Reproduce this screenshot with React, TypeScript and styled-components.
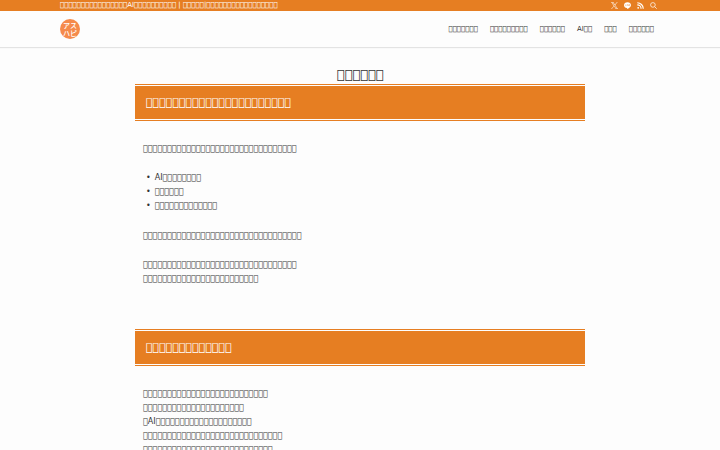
import React from "react";
import styled, { createGlobalStyle } from "styled-components";

const ORANGE = "#e67e22";
const box = (count: number) => "\uE000".repeat(count);

const GlobalStyle = createGlobalStyle`
  * { box-sizing: border-box; }
  body {
    margin: 0;
    background: #fdfdfd;
    color: #333;
    font-family: "DejaVu Sans", sans-serif;
    font-size: 8px;
    overflow-x: hidden;
  }
  a { color: inherit; text-decoration: none; }
`;

const TopBar = styled.div`
  background: ${ORANGE};
  color: #fff;
`;

const Inner = styled.div`
  display: flex;
  align-items: center;
  justify-content: space-between;
  width: 100%;
  max-width: 648px;
  margin: 0 auto;
  padding: 0 24px;
`;

const TopInner = styled(Inner)`
  height: 11px;
`;

const Tagline = styled.span`
  font-size: 7px;
  line-height: 11px;
  white-space: nowrap;
`;

const Icons = styled.div`
  display: flex;
  align-items: center;
  gap: 6px;
  padding-right: 3px;
`;

const IconLink = styled.a`
  display: flex;
`;

const IconButton = styled.button`
  display: flex;
  padding: 0;
  border: 0;
  background: none;
  color: inherit;
`;

const Header = styled.header`
  background: #fdfdfd;
  box-shadow: 0 1px 1px rgba(0, 0, 0, 0.1);
`;

const HeaderInner = styled(Inner)`
  height: 36px;
`;

const Nav = styled.nav`
  display: flex;
  gap: 12px;
  padding-right: 6px;
  font-size: 7px;
  line-height: 13px;
`;

const Logo = styled.a`
  display: grid;
  place-content: center;
  width: 20px;
  height: 20px;
  border-radius: 50%;
  background: #f58a4b;
  color: #fff;
  font: 500 7px/8px "Noto Sans CJK JP", sans-serif;
  text-align: center;
`;

const Main = styled.main`
  width: 100%;
  max-width: 450px;
  margin: 0 auto;
  padding-top: 19px;
`;

const Title = styled.h1`
  margin: 0 0 1px;
  font-size: 13px;
  font-weight: 400;
  line-height: 17px;
  text-align: center;
`;

const HeadingFrame = styled.div`
  border-top: 1px solid ${ORANGE};
  border-bottom: 1px solid ${ORANGE};
  padding: 1px 0;
`;

const Heading = styled.h2`
  margin: 0;
  padding: 9px 11px 8px;
  background: ${ORANGE};
  color: #fff;
  font-size: 11px;
  font-weight: 400;
  line-height: 16px;
`;

const Body = styled.div`
  padding: 21px 8px 28px;
`;

const Text = styled.p`
  margin: 0 0 15px;
  line-height: 14px;
`;

const List = styled.ul`
  margin: 0 0 16px;
  padding: 0 0 0 3px;
  line-height: 14px;
  list-style: none;
`;

const Item = styled.li`
  display: flex;
  gap: 4px;
  &::before { content: "•"; }
`;

const XIcon = () => (
  <svg width="7" height="7" viewBox="0 0 24 24" fill="currentColor">
    <path d="M14.3 10.2 22.9 0h-2l-7.5 8.8L7.4 0H.5l9 13.3L.5 24h2l8-9.3 6.3 9.3h6.9zM3.3 1.6h3.1l14.5 20.9h-3.1z" />
  </svg>
);

const LineIcon = () => (
  <svg width="7" height="7" viewBox="0 0 24 24">
    <path fill="currentColor" d="M12 1C5 1 0 5.300 0 11c0 5 4.300 9 10.200 9.800.8.2.6.8.3 3.200C16 21.500 24 17 24 11 24 5.300 19 1 12 1z" />
    <path fill="none" stroke={ORANGE} strokeWidth="1" d="M5 8v5h3M10 8v5M12 13V8l4 5V8M21 8h-3v5h3M18 10.500h3" />
  </svg>
);

const RssIcon = () => (
  <svg width="7" height="7" viewBox="0 0 24 24" fill="none" stroke="currentColor" strokeWidth="4">
    <path d="M1 10a13 13 0 0 1 13 13M1 2.500A20.500 20.500 0 0 1 21.500 23" />
    <circle cx="4" cy="20" r="3" fill="currentColor" stroke="none" />
  </svg>
);

const SearchIcon = () => (
  <svg width="7" height="7" viewBox="0 0 24 24" fill="none" stroke="currentColor" strokeWidth="2.500">
    <circle cx="10" cy="10" r="8" />
    <path d="m16 16 7 7" />
  </svg>
);

const navItems = [box(7), box(9), box(6), "AI" + box(2), box(3), box(6)];
const features = ["AI" + box(8), box(6), box(13)];

export default function App() {
  return (
    <>
      <GlobalStyle />
      <TopBar>
        <TopInner>
          <Tagline>
            {box(16)}AI{box(10)} | {box(5)}|{box(17)}
          </Tagline>
          <Icons>
            <IconLink href="#x" aria-label="X"><XIcon /></IconLink>
            <IconLink href="#line" aria-label="LINE"><LineIcon /></IconLink>
            <IconLink href="#rss" aria-label="RSS"><RssIcon /></IconLink>
            <IconButton type="button" aria-label="Search"><SearchIcon /></IconButton>
          </Icons>
        </TopInner>
      </TopBar>
      <Header>
        <HeaderInner>
          <Logo href="#home">アス<br />ハピ</Logo>
          <Nav>
            {navItems.map((label, i) => (
              <a key={i} href={`#menu-${i}`}>{label}</a>
            ))}
          </Nav>
        </HeaderInner>
      </Header>
      <Main>
        <Title>{box(6)}</Title>
        <HeadingFrame><Heading>{box(22)}</Heading></HeadingFrame>
        <Body>
          <Text>{box(32)}</Text>
          <List>
            {features.map((label) => <Item key={label}>{label}</Item>)}
          </List>
          <Text>{box(33)}</Text>
          <Text>{box(32)}<br />{box(24)}</Text>
        </Body>
        <HeadingFrame><Heading>{box(13)}</Heading></HeadingFrame>
        <Body>
          <Text>
            {box(26)}<br />{box(21)}<br />{box(1)}AI{box(20)}<br />{box(29)}<br />{box(27)}
          </Text>
        </Body>
      </Main>
    </>
  );
}
